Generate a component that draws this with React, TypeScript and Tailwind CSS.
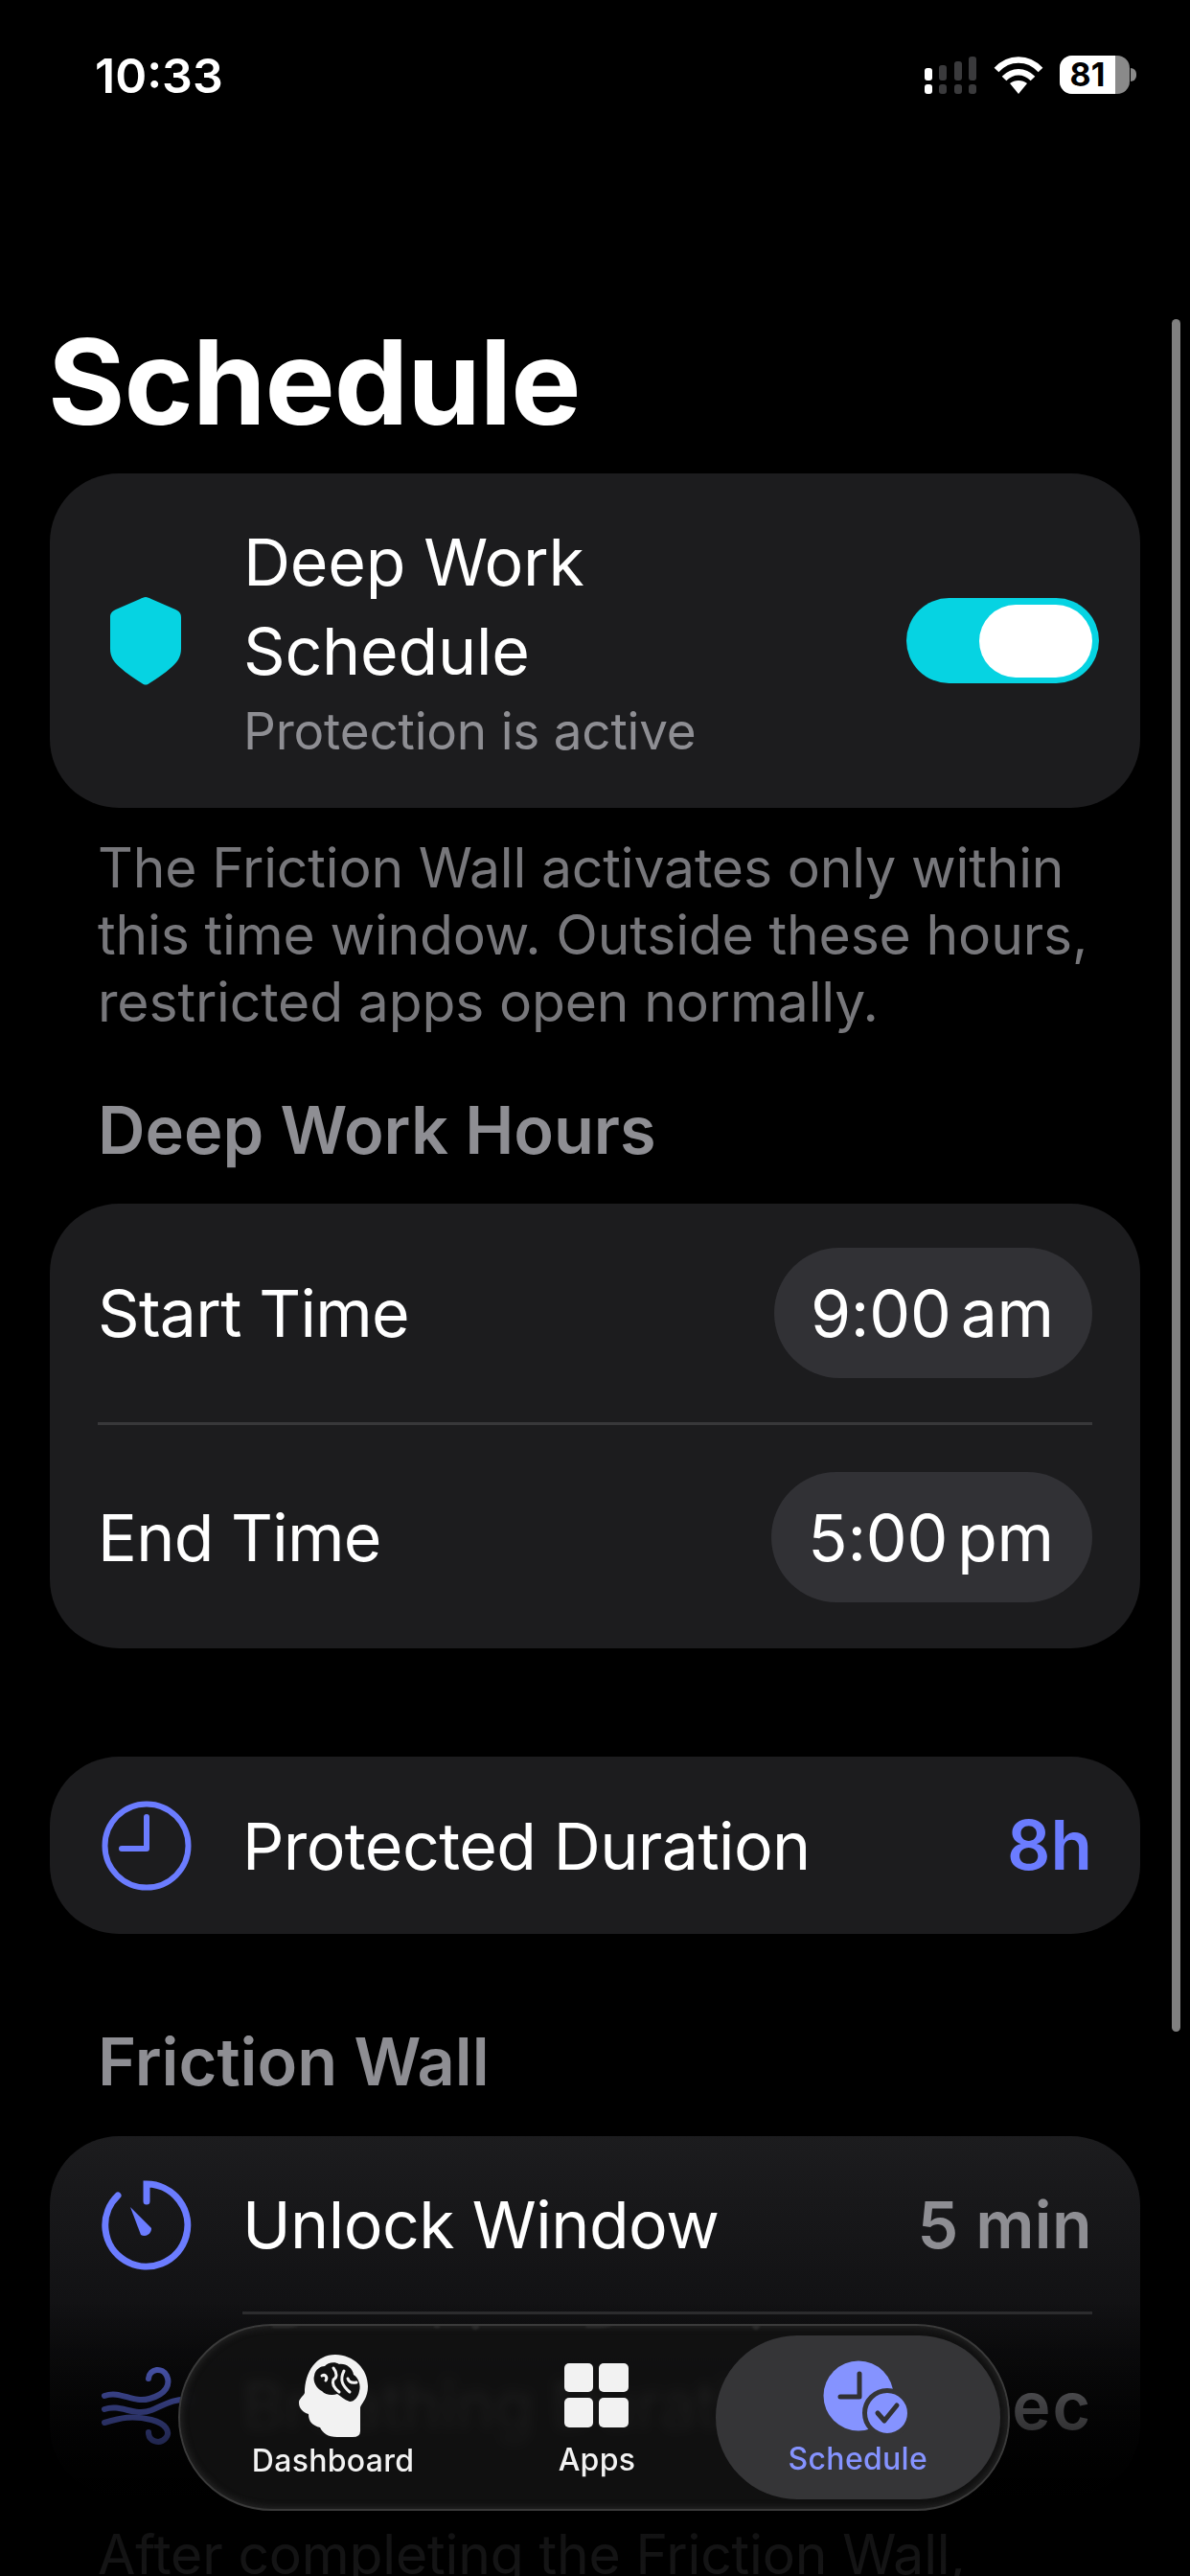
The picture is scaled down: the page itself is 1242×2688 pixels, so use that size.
import type { ReactNode } from "react";

const Card = ({ children, className = "" }: { children: ReactNode; className?: string }) => (
  <div className={`rounded-[72px] bg-[#1c1c1e] ${className}`}>{children}</div>
);

const StatusBar = () => (
  <div className="flex h-[130px] items-start justify-between pl-[99px] pr-[56px] pt-[50px]">
    <span className="text-[50px] font-semibold leading-[58px] text-white">10:33</span>
    <div className="mt-[8px] flex items-center">
      <svg width="56" height="40" viewBox="0 0 56 40">
        <g fill="#3a3a3c">
          <rect x="16" y="10" width="8" height="16" rx="3" />
          <rect x="32" y="6" width="8" height="20" rx="3" />
          <rect x="47" y="1" width="8" height="25" rx="3" />
          <rect x="16" y="30" width="8" height="10" rx="3" />
          <rect x="32" y="30" width="8" height="10" rx="3" />
          <rect x="47" y="30" width="8" height="10" rx="3" />
        </g>
        <rect x="1" y="13" width="8" height="13" rx="3" fill="#fff" />
        <rect x="1" y="30" width="8" height="10" rx="3" fill="#fff" />
      </svg>
      <svg className="ml-[17px]" width="52" height="40" viewBox="0 0 52 40" fill="none" stroke="#fff" strokeWidth="6.5">
        <path d="M3 15 C16 1 36 1 49 15" />
        <path d="M11 24 C20 15 32 15 41 24" />
        <path d="M26 40 L17 29 C22 25 30 25 35 29 Z" fill="#fff" stroke="none" />
      </svg>
      <div className="relative ml-[17px] flex h-[40px] w-[73px] items-center overflow-hidden rounded-[13px] bg-[#8a8a8a]">
        <div className="flex h-full w-[58px] items-center justify-center bg-white text-[34px] font-bold leading-none text-black">81</div>
      </div>
      <div className="ml-[1px] h-[14px] w-[6px] rounded-r-full bg-[#8a8a8a]" />
    </div>
  </div>
);

const TimePill = ({ time, suffix }: { time: string; suffix: string }) => (
  <div className="flex h-[136px] items-center rounded-[68px] bg-[#313135] pl-[38px] pr-[40px] text-[68px] leading-none tracking-[-0.2px] text-white">
    <span>{time}</span>
    <span className="ml-[10px]">{suffix}</span>
  </div>
);

const ClockIcon = () => (
  <svg width="94" height="94" viewBox="0 0 94 94" fill="none" stroke="#6b7cff" strokeWidth="6" strokeLinecap="round" strokeLinejoin="round">
    <circle cx="47" cy="47" r="43.5" />
    <path d="M47 17 V50 H21" />
  </svg>
);

const TimerIcon = () => (
  <svg width="94" height="94" viewBox="0 0 94 94" fill="none" stroke="#6b7cff" strokeWidth="7" strokeLinecap="round">
    <path d="M47 22 V4 A43 43 0 1 1 17 16" />
    <path d="M30 28 L52 50 A7.5 7.5 0 0 1 41 57 Z" fill="#6b7cff" stroke="none" />
  </svg>
);

const WindIcon = () => (
  <svg width="94" height="84" viewBox="0 0 94 84" fill="none" stroke="#6b7cff" strokeWidth="6" strokeLinecap="round">
    <path d="M3 32 C20 26 32 40 50 35 C68 30 72 20 68 11 C64 2 50 3 49 14" />
    <path d="M3 46 C20 40 34 54 52 47 C64 42 76 34 92 36" />
    <path d="M3 60 C20 55 32 52 52 57 C68 61 72 70 67 76 C61 83 49 80 49 70" />
  </svg>
);

const BrainHeadIcon = () => (
  <svg width="72" height="86" viewBox="0 0 72 86">
    <path
      d="M38 0 C57 0 72 15 72 33 C72 45 66 50 64 55 L64 80 Q64 86 56 86 L40 86 C30 86 25 82 22 76 C14 74 10 70 10 62 C4 60 0 56 0 50 C0 46 4 44 6 40 C6 18 18 0 38 0 Z"
      fill="#f2f2f2"
    />
    <path
      d="M16 22 C17 15 23 12 27 12 C30 8 38 7 42 10 C49 9 56 14 57 21 C62 24 65 32 63 38 C62 44 58 49 53 49 C47 47 43 43 40 41 C35 43 27 42 24 38 C19 36 14 28 16 22 Z"
      fill="#111"
    />
    <path
      d="M24 22 C28 20 30 24 28 27 M36 14 C40 19 40 24 36 26 C34 31 38 36 42 39 M47 17 C42 27 46 33 53 39 M60 29 C55 30 52 28 51 25"
      fill="none"
      stroke="#f2f2f2"
      strokeWidth="3"
      strokeLinecap="round"
    />
  </svg>
);

const AppsIcon = () => (
  <div className="grid grid-cols-[30px_31px] grid-rows-[30px_31px] gap-[6px]">
    <div className="rounded-[5px] bg-[#f2f2f2]" />
    <div className="rounded-[5px] bg-[#f2f2f2]" />
    <div className="rounded-[5px] bg-[#f2f2f2]" />
    <div className="rounded-[5px] bg-[#f2f2f2]" />
  </div>
);

const ScheduleIcon = () => (
  <svg width="90" height="78" viewBox="0 0 90 78" fill="none">
    <circle cx="37" cy="37" r="36.5" fill="#8593ff" />
    <path d="M38 14 V38 H18" stroke="#313133" strokeWidth="5" strokeLinecap="round" strokeLinejoin="round" />
    <circle cx="67" cy="55" r="23.5" fill="#8593ff" stroke="#353537" strokeWidth="5" />
    <path d="M57 55 L64 63 L77 47" stroke="#313133" strokeWidth="5" strokeLinecap="round" strokeLinejoin="round" />
  </svg>
);

const TabBar = () => (
  <div className="absolute left-[186px] top-[2425px] flex h-[195px] w-[868px] overflow-hidden rounded-[98px] border-2 border-[#3a3a3a] bg-[#121212]/90 py-[10px] pl-[8px] pr-[8px] shadow-[inset_0_0_6px_2px_#242424] backdrop-blur-[6px]">
    <span className="absolute left-[90px] top-[-56px] -scale-y-100 whitespace-nowrap text-[68px] leading-[68px] text-[#2a2a2a] blur-[1px]">
      Breathing Duration
    </span>
    <div className="relative flex w-[304px] flex-col items-center pt-[20px]">
      <BrainHeadIcon />
      <span className="mt-[5px] text-[32px] font-medium leading-[40px] tracking-[0.3px] text-[#f2f2f2]">Dashboard</span>
    </div>
    <div className="relative flex w-[248px] flex-col items-center pt-[29px]">
      <AppsIcon />
      <span className="mt-[14px] text-[32px] font-medium leading-[40px] tracking-[0.3px] text-[#f2f2f2]">Apps</span>
    </div>
    <div className="relative flex w-[298px] flex-col items-center rounded-[85px] bg-[#353537] pl-[18px] pt-[26px]">
      <ScheduleIcon />
      <span className="ml-[-18px] mt-[5px] text-[32px] font-medium leading-[40px] tracking-[0.3px] text-[#8593ff]">Schedule</span>
    </div>
  </div>
);

export default function App() {
  return (
    <div className="relative h-[2688px] w-[1242px] overflow-hidden bg-black font-['Inter',sans-serif] text-white">
      <StatusBar />

      <main className="px-[52px]">
        <h1 className="ml-[-2px] mt-[196px] text-[123px] font-bold leading-[146px] tracking-[-1px]">Schedule</h1>

        <Card className="mt-[22px] flex h-[349px] items-center pl-[63px] pr-[43px] tracking-[-0.2px]">
          <svg width="74" height="92" viewBox="0 0 76 92" preserveAspectRatio="none" className="shrink-0">
            <path
              d="M38 0 C40 0 42 1 44 2 L70 13 C74 15 76 17 76 21 L76 54 C76 62 72 68 66 73 C58 80 50 85 42 90 C39 92 37 92 34 90 C26 85 18 80 10 73 C4 68 0 62 0 54 L0 21 C0 17 2 15 6 13 L32 2 C34 1 36 0 38 0 Z"
              fill="#06d3e2"
            />
          </svg>
          <div className="ml-[65px] flex-1">
            <div className="w-[440px] text-[68px] leading-[93px]">Deep Work Schedule</div>
            <div className="mt-[2px] text-[53px] leading-[70px] text-[#8e8e93]">Protection is active</div>
          </div>
          <div className="flex h-[89px] w-[201px] items-center justify-end rounded-full bg-[#06d3e2] pr-[7px]">
            <div className="h-[76px] w-[118px] rounded-full bg-white" />
          </div>
        </Card>

        <p className="mt-[28px] pl-[50px] pr-[30px] text-[57px] leading-[70px] tracking-[-0.15px] text-[#77777b]">
          The Friction Wall activates only within this time window. Outside these hours, restricted apps open normally.
        </p>

        <h2 className="mt-[59px] px-[50px] text-[68.5px] font-semibold leading-[80px] text-[#8e8e93]">Deep Work Hours</h2>

        <Card className="mt-[36px] pl-[50px] pr-[50px] tracking-[-0.7px]">
          <div className="flex h-[231px] items-center justify-between border-b-[3px] border-[#38383a] text-[68px]">
            <span>Start Time</span>
            <TimePill time="9:00" suffix="am" />
          </div>
          <div className="flex h-[233px] items-center justify-between text-[68px]">
            <span>End Time</span>
            <TimePill time="5:00" suffix="pm" />
          </div>
        </Card>

        <Card className="mt-[113px] flex h-[185px] items-center justify-between pl-[54px] pr-[50px] text-[68px] tracking-[-0.6px]">
          <div className="flex items-center gap-[53px]">
            <ClockIcon />
            <span>Protected Duration</span>
          </div>
          <span className="text-[71px] font-semibold tracking-normal text-[#6b7cff]">8h</span>
        </Card>

        <h2 className="mt-[94px] px-[50px] text-[68.5px] font-semibold leading-[80px] text-[#8e8e93]">Friction Wall</h2>

        {/* the card darkens toward the bottom while its text stays bright */}
        <Card className="mt-[37px] bg-[linear-gradient(to_bottom,#1c1c1e_0%,#111113_50%,#0a0a0b_75%,#020202_100%)] pl-[54px] pr-[50px] tracking-[-0.5px]">
          <div className="flex h-[186px] items-center gap-[53px] text-[68px]">
            <TimerIcon />
            <div className="flex h-full flex-1 items-center justify-between border-b-[3px] border-[#2f2f31]">
              <span>Unlock Window</span>
              <span className="font-semibold tracking-[0.4px] text-[#8e8e93]">5 min</span>
            </div>
          </div>
          <div className="flex h-[189px] items-center gap-[53px] text-[68px]">
            <WindIcon />
            <div className="flex flex-1 items-center justify-between">
              <span>Breathing Duration</span>
              <span className="font-semibold tracking-[2px] text-[#8e8e93]">30 sec</span>
            </div>
          </div>
        </Card>

        <p className="mt-[27px] pl-[50px] pr-[110px] text-[57px] leading-[70px] tracking-[-0.15px] text-[#77777b]">
          After completing the Friction Wall, the app stays unlocked for this long.
        </p>
      </main>

      {/* bottom fade under the tab bar */}
      <div className="absolute inset-x-0 bottom-0 h-[288px] bg-[linear-gradient(to_bottom,transparent_0%,rgba(0,0,0,0.55)_38%,rgba(0,0,0,0.88)_69%,rgba(0,0,0,0.82)_100%)]" />

      {/* scroll indicator */}
      <div className="absolute left-[1223px] top-[333px] h-[1787px] w-[9px] rounded-full bg-[#808080]" />

      <TabBar />
    </div>
  );
}
